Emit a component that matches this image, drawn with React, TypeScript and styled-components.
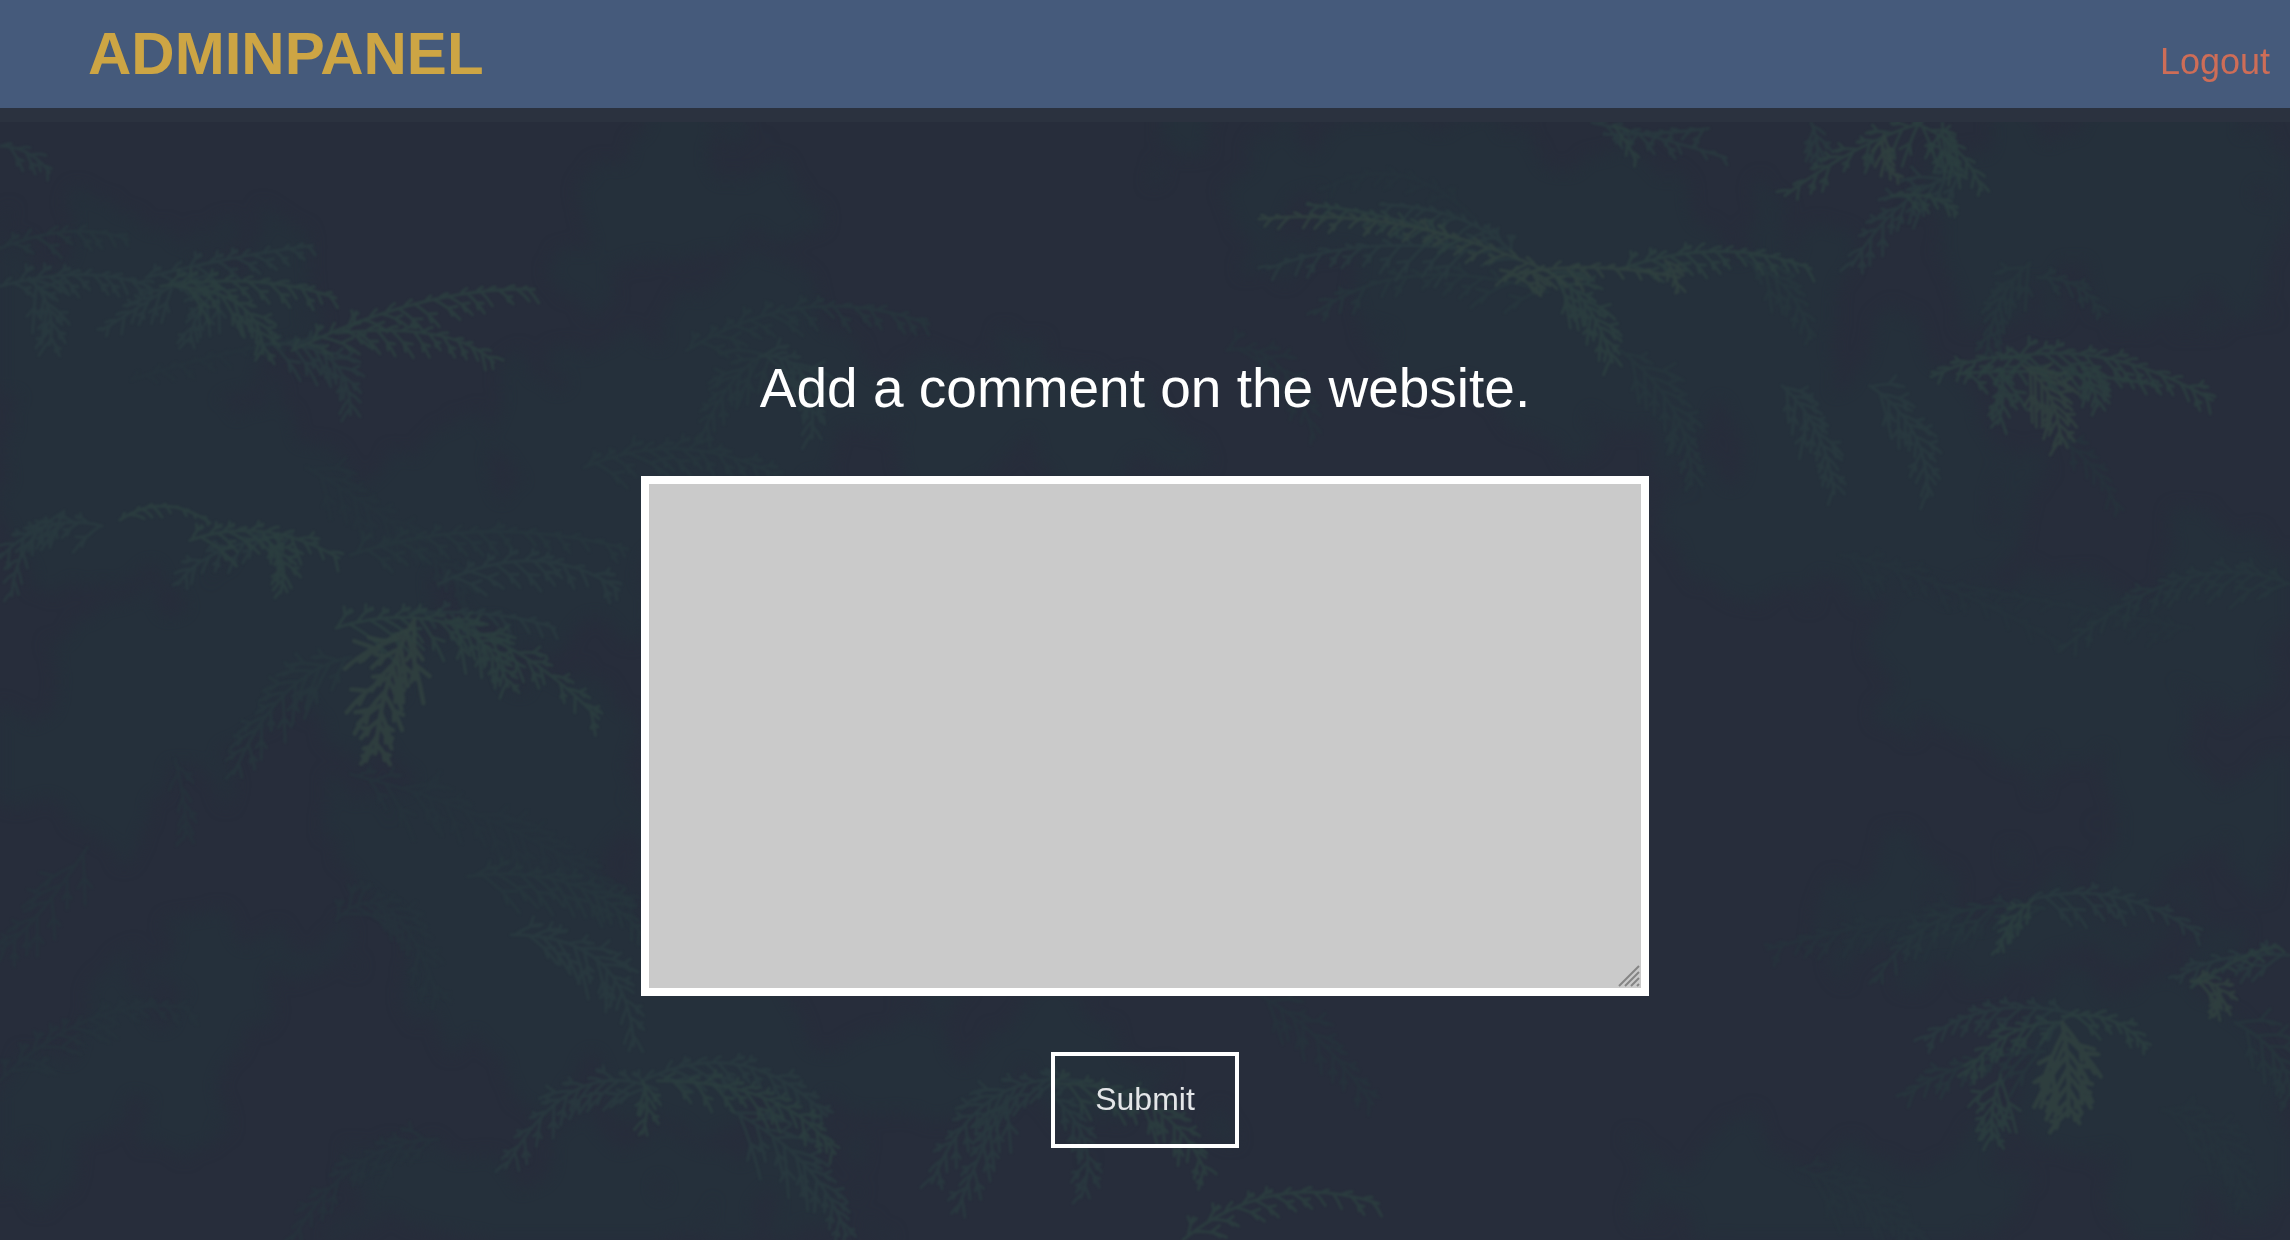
import React from "react";
import styled, { createGlobalStyle } from "styled-components";

const GlobalStyle = createGlobalStyle`
  *, *::before, *::after { box-sizing: border-box; }
  body {
    margin: 0;
    background: #272d3b;
    font-family: "Liberation Sans", Arial, sans-serif;
  }
`;

const Page = styled.div`
  position: relative;
  isolation: isolate;
  display: flex;
  flex-direction: column;
  min-height: 100vh;
`;

const Backdrop = styled.svg`
  position: absolute;
  inset: 0;
  z-index: -1;
  width: 100%;
  height: 100%;
`;

const Header = styled.header`
  display: flex;
  justify-content: space-between;
  align-items: baseline;
  height: 108px;
  padding: 0 20px 0 88px;
  background: #455a7b;
`;

const Brand = styled.h1`
  margin: 0;
  color: #cda544;
  font-size: 60px;
  font-weight: 700;
  line-height: 108px;
`;

const LogoutLink = styled.a`
  color: #ce6d57;
  font-size: 36px;
  text-decoration: none;
`;

const Main = styled.main`
  flex: 1;
  border-top: 14px solid #2b323f;
  padding: 234px 0 56px;
`;

const CommentForm = styled.form`
  display: flex;
  flex-direction: column;
  align-items: center;
  gap: 56px;
`;

const Prompt = styled.label`
  color: #fff;
  font-size: 55px;
  line-height: 64px;
`;

const CommentField = styled.div`
  position: relative;
  display: flex;
  width: 44%;
  min-width: 320px;
`;

const CommentBox = styled.textarea`
  flex: 1;
  min-width: 0;
  height: 520px;
  margin: 0;
  padding: 8px;
  border: 8px solid #fff;
  border-radius: 0;
  outline: none;
  resize: none;
  background: #cacaca;
  color: #222;
  font: 32px "Liberation Sans", Arial, sans-serif;
`;

const Grip = styled.svg`
  position: absolute;
  right: 9px;
  bottom: 9px;
  pointer-events: none;
`;

const SubmitButton = styled.button`
  padding: 0 40px 2px;
  height: 96px;
  border: 4px solid #fff;
  background: transparent;
  color: #e4e6e8;
  font: 32px "Liberation Sans", Arial, sans-serif;
  cursor: pointer;
`;

/* Frond: spine start, control point, spine end, leaf length, leaf count, tone */
type Frond = [number, number, number, number, number, number, number, number, number];

const TONES = ["#26323c", "#27363d", "#293a3f", "#2c3e3f", "#30413f"];

const FRONDS: Frond[] = [
  // top right
  [1090, 84, 1130, 92, 1182, 108, 16, 9, 2],
  [1105, 86, 1115, 98, 1120, 110, 8, 4, 3],
  [1170, 88, 1140, 92, 1098, 92, 12, 8, 2],
  [1316, 84, 1270, 98, 1222, 134, 20, 10, 3],
  [1310, 84, 1344, 96, 1357, 130, 18, 9, 3],
  [1346, 118, 1300, 128, 1268, 182, 24, 11, 2],
  [1295, 134, 1325, 130, 1340, 146, 12, 6, 3],
  [1290, 92, 1285, 110, 1300, 122, 12, 6, 4],
  [1240, 84, 1246, 96, 1244, 112, 14, 5, 2],
  [1330, 84, 1330, 110, 1342, 122, 14, 6, 3],
  // long lit branch
  [1060, 186, 960, 140, 862, 150, 18, 20, 4],
  [1000, 165, 950, 145, 895, 140, 16, 12, 3],
  [1010, 172, 930, 160, 868, 184, 24, 12, 2],
  [1040, 178, 1010, 142, 945, 140, 18, 12, 2],
  [1030, 190, 1080, 176, 1150, 190, 16, 13, 4],
  [1050, 188, 1054, 194, 1056, 200, 8, 3, 4],
  [1140, 178, 1148, 186, 1149, 200, 10, 4, 4],
  [1110, 184, 1180, 160, 1240, 184, 20, 15, 3],
  [1060, 186, 1090, 200, 1104, 248, 24, 13, 3],
  [1190, 176, 1230, 190, 1240, 232, 20, 9, 1],
  [1060, 200, 960, 170, 900, 215, 24, 12, 1],
  [1110, 240, 1160, 280, 1158, 332, 24, 13, 1],
  [1010, 150, 960, 100, 905, 130, 20, 9, 0],
  // right cluster
  [1390, 245, 1360, 240, 1322, 258, 18, 8, 3],
  [1370, 246, 1440, 230, 1515, 274, 26, 17, 3],
  [1340, 256, 1400, 250, 1480, 264, 16, 14, 3],
  [1385, 250, 1410, 268, 1411, 304, 24, 11, 4],
  [1370, 256, 1374, 270, 1368, 290, 18, 6, 3],
  [1425, 250, 1434, 262, 1436, 278, 16, 6, 3],
  [1390, 180, 1365, 200, 1360, 244, 20, 10, 1],
  [1395, 190, 1430, 190, 1438, 216, 14, 7, 1],
  [1280, 264, 1320, 290, 1320, 340, 22, 12, 2],
  [1220, 264, 1250, 290, 1256, 338, 22, 12, 2],
  [1410, 300, 1440, 320, 1450, 350, 14, 7, 0],
  // upper left
  [0, 196, 60, 180, 102, 196, 22, 12, 2],
  [0, 100, 20, 100, 34, 118, 18, 5, 2],
  [0, 170, 50, 150, 88, 164, 18, 9, 1],
  [20, 190, 40, 210, 34, 236, 22, 8, 2],
  [100, 190, 160, 175, 214, 168, 22, 11, 2],
  [110, 196, 180, 186, 230, 204, 22, 13, 3],
  [120, 196, 180, 200, 180, 242, 24, 11, 3],
  [120, 194, 96, 210, 70, 226, 18, 8, 2],
  [150, 196, 132, 214, 130, 234, 18, 6, 2],
  [200, 240, 290, 196, 366, 198, 24, 18, 3],
  [230, 228, 310, 220, 338, 248, 20, 12, 3],
  [180, 236, 240, 230, 240, 284, 24, 12, 2],
  [90, 260, 150, 240, 220, 230, 12, 12, 0],
  // middle left
  [70, 360, 30, 350, 0, 382, 22, 9, 2],
  [44, 350, 10, 370, 8, 408, 16, 8, 2],
  [82, 356, 112, 336, 144, 358, 8, 9, 3],
  [130, 370, 180, 352, 232, 382, 22, 13, 3],
  [180, 368, 200, 380, 192, 406, 18, 7, 3],
  [200, 366, 140, 372, 122, 400, 18, 9, 2],
  [230, 430, 320, 400, 410, 492, 28, 19, 3],
  [284, 424, 262, 460, 257, 516, 36, 12, 4],
  [305, 424, 340, 440, 348, 470, 24, 10, 3],
  [280, 420, 340, 416, 380, 430, 16, 10, 2],
  [240, 450, 190, 460, 160, 530, 28, 13, 1],
  [240, 380, 330, 350, 430, 376, 24, 17, 1],
  [300, 400, 370, 366, 424, 404, 24, 13, 2],
  [210, 320, 280, 360, 320, 406, 24, 15, 0],
  // centre, behind the heading
  [470, 240, 550, 190, 636, 222, 24, 17, 1],
  [520, 244, 560, 240, 556, 300, 26, 12, 2],
  [530, 240, 500, 250, 480, 300, 24, 10, 1],
  [400, 320, 470, 290, 540, 330, 28, 15, 1],
  [840, 240, 880, 230, 900, 300, 24, 10, 0],
  // lower left
  [240, 530, 360, 560, 436, 620, 30, 20, 0],
  [230, 630, 270, 590, 300, 684, 30, 14, 0],
  [320, 600, 400, 590, 440, 640, 30, 15, 1],
  [350, 640, 430, 640, 434, 716, 28, 15, 2],
  [0, 740, 60, 680, 130, 690, 28, 15, 0],
  [60, 580, 20, 640, 0, 650, 26, 9, 0],
  [120, 520, 130, 560, 126, 574, 14, 6, 0],
  [450, 746, 390, 720, 346, 800, 26, 14, 2],
  [440, 740, 510, 706, 566, 764, 24, 15, 2],
  [450, 740, 540, 740, 572, 790, 24, 15, 3],
  [440, 740, 446, 756, 440, 776, 14, 5, 3],
  [500, 760, 560, 790, 580, 846, 28, 14, 2],
  [740, 740, 670, 730, 638, 810, 26, 15, 2],
  [720, 742, 800, 740, 826, 804, 28, 16, 3],
  [720, 750, 756, 780, 740, 820, 20, 9, 2],
  [690, 750, 670, 790, 655, 830, 22, 9, 2],
  [810, 849, 870, 800, 944, 824, 22, 13, 3],
  [300, 780, 240, 780, 200, 849, 26, 13, 0],
  [860, 680, 900, 700, 940, 756, 22, 11, 0],
  // right, middle and lower
  [1568, 400, 1500, 370, 1410, 446, 24, 17, 1],
  [1260, 380, 1320, 390, 1410, 440, 20, 13, 0],
  [1500, 430, 1440, 420, 1340, 400, 16, 13, 0],
  [1370, 620, 1280, 630, 1210, 650, 26, 14, 0],
  [1400, 622, 1320, 610, 1284, 672, 24, 13, 1],
  [1390, 616, 1450, 600, 1506, 640, 20, 13, 2],
  [1392, 616, 1374, 630, 1368, 652, 12, 6, 3],
  [1568, 654, 1520, 650, 1490, 670, 20, 9, 2],
  [1500, 672, 1530, 670, 1516, 696, 16, 7, 4],
  [1500, 676, 1540, 650, 1560, 648, 12, 7, 3],
  [1420, 694, 1360, 680, 1318, 712, 22, 12, 2],
  [1410, 700, 1370, 700, 1346, 736, 20, 9, 3],
  [1412, 696, 1450, 690, 1470, 718, 16, 9, 3],
  [1412, 700, 1418, 730, 1416, 764, 34, 9, 4],
  [1400, 720, 1350, 720, 1304, 750, 24, 12, 1],
  [1370, 736, 1362, 760, 1364, 780, 26, 7, 3],
  [1530, 700, 1568, 720, 1568, 750, 26, 8, 1],
  [1480, 760, 1530, 770, 1536, 820, 26, 12, 0],
  [1230, 800, 1290, 820, 1310, 849, 30, 12, 0],
];

/* Dim foliage masses behind the fronds: cx, cy, rx, ry, rotation */
const MASSES: [number, number, number, number, number][] = [
  [60, 220, 150, 70, 0],
  [230, 360, 230, 70, 10],
  [110, 480, 190, 60, -18],
  [340, 570, 110, 110, 30],
  [460, 290, 130, 80, -20],
  [470, 130, 90, 50, 0],
  [700, 290, 130, 40, 0],
  [1080, 200, 200, 90, 10],
  [950, 110, 130, 30, 0],
  [1450, 140, 130, 80, 0],
  [1270, 330, 120, 80, 0],
  [1490, 420, 120, 50, 0],
  [1400, 470, 110, 60, 20],
  [90, 730, 150, 45, -35],
  [440, 700, 140, 60, 20],
  [650, 730, 180, 45, 0],
  [420, 820, 180, 35, 0],
  [1370, 630, 140, 30, 0],
  [1510, 560, 80, 35, 0],
  [1480, 760, 110, 70, 20],
  [1250, 825, 120, 35, 0],
];

/* Irregular but repeatable variation for the leaves */
function jitter(seed: number): number {
  const value = Math.sin(seed * 127.1) * 43758.5453;
  return value - Math.floor(value) - 0.5;
}

function frondPath([x0, y0, cx, cy, x1, y1, size, count]: Frond): string {
  const parts = [`M${x0} ${y0}Q${cx} ${cy} ${x1} ${y1}`];
  const steps = Math.round(count * 0.8);
  for (let i = 0; i < steps; i += 1) {
    [-1, 1].forEach((side) => {
      const seed = x0 + y1 * 1.7 + i * 3.1 + side;
      const t = Math.min(0.97, (i + 0.5 + side * 0.25 + jitter(seed) * 0.4) / steps);
      const u = 1 - t;
      const px = u * u * x0 + 2 * u * t * cx + t * t * x1;
      const py = u * u * y0 + 2 * u * t * cy + t * t * y1;
      const heading = Math.atan2(u * (cy - y0) + t * (y1 - cy), u * (cx - x0) + t * (x1 - cx));
      const angle = heading + side * (0.68 + jitter(seed + 9) * 0.35);
      const dx = Math.cos(angle);
      const dy = Math.sin(angle);
      const lift = dy < -0.3 ? 0.6 : 1;
      const length = size * lift * (1.05 - 0.7 * t) * (1 + jitter(seed + 4) * 0.7);
      const tx = px + dx * length;
      const ty = py + dy * length + length * 0.25;
      parts.push(
        `M${px.toFixed(1)} ${py.toFixed(1)}Q${(px + dx * length * 0.6).toFixed(1)} ${(py + dy * length * 0.6).toFixed(1)} ${tx.toFixed(1)} ${ty.toFixed(1)}`,
      );
      if (length < 11) return;
      [-0.6, 0.6].forEach((turn) => {
        const at = 0.55;
        const twig = length * 0.3;
        parts.push(
          `M${(px + dx * length * at).toFixed(1)} ${(py + dy * length * at + 1).toFixed(1)}l${(Math.cos(angle + turn) * twig).toFixed(1)} ${(Math.sin(angle + turn) * twig).toFixed(1)}`,
        );
      });
    });
  }
  return parts.join("");
}

function Foliage() {
  return (
    <Backdrop viewBox="0 0 1568 849" preserveAspectRatio="xMidYMid slice" aria-hidden="true">
      <defs>
        <filter
          id="haze"
          x="0"
          y="0"
          width="1568"
          height="849"
          filterUnits="userSpaceOnUse"
          colorInterpolationFilters="sRGB"
        >
          <feTurbulence type="fractalNoise" baseFrequency="0.018 0.012" numOctaves="4" seed="7" result="noise" />
          <feDisplacementMap in="SourceGraphic" in2="noise" scale="150" xChannelSelector="R" yChannelSelector="G" />
          <feGaussianBlur stdDeviation="5" />
        </filter>
        <filter
          id="soft"
          x="0"
          y="0"
          width="1568"
          height="849"
          filterUnits="userSpaceOnUse"
          colorInterpolationFilters="sRGB"
        >
          <feGaussianBlur stdDeviation="0.7" />
        </filter>
      </defs>
      <rect width="1568" height="849" fill="#272d3b" />
      <g filter="url(#haze)" fill="#25303b">
        {MASSES.map(([cx, cy, rx, ry, turn]) => (
          <ellipse key={`${cx}-${cy}`} cx={cx} cy={cy} rx={rx} ry={ry} transform={`rotate(${turn} ${cx} ${cy})`} />
        ))}
      </g>
      <g filter="url(#soft)" fill="none" strokeLinecap="round">
        {[...FRONDS]
          .sort((a, b) => a[8] - b[8])
          .map((frond) => (
            <path
              key={frond.join()}
              d={frondPath(frond)}
              stroke={TONES[frond[8]]}
              strokeWidth={frond[6] > 32 ? 3 : 2}
              strokeOpacity={0.85}
            />
          ))}
      </g>
    </Backdrop>
  );
}

export default function App() {
  return (
    <>
      <GlobalStyle />
      <Page>
        <Foliage />
        <Header>
          <Brand>ADMINPANEL</Brand>
          <LogoutLink href="#logout">Logout</LogoutLink>
        </Header>
        <Main>
          <CommentForm onSubmit={(event: React.FormEvent) => event.preventDefault()}>
            <Prompt htmlFor="comment">Add a comment on the website.</Prompt>
            <CommentField>
              <CommentBox id="comment" name="comment" />
              <Grip width="22" height="22" viewBox="0 0 22 22" aria-hidden="true">
                <path d="M1 21L21 1M7 21L21 7M13 21L21 13M19 21L21 19" stroke="#858585" strokeWidth="2" fill="none" />
              </Grip>
            </CommentField>
            <SubmitButton type="submit">Submit</SubmitButton>
          </CommentForm>
        </Main>
      </Page>
    </>
  );
}
